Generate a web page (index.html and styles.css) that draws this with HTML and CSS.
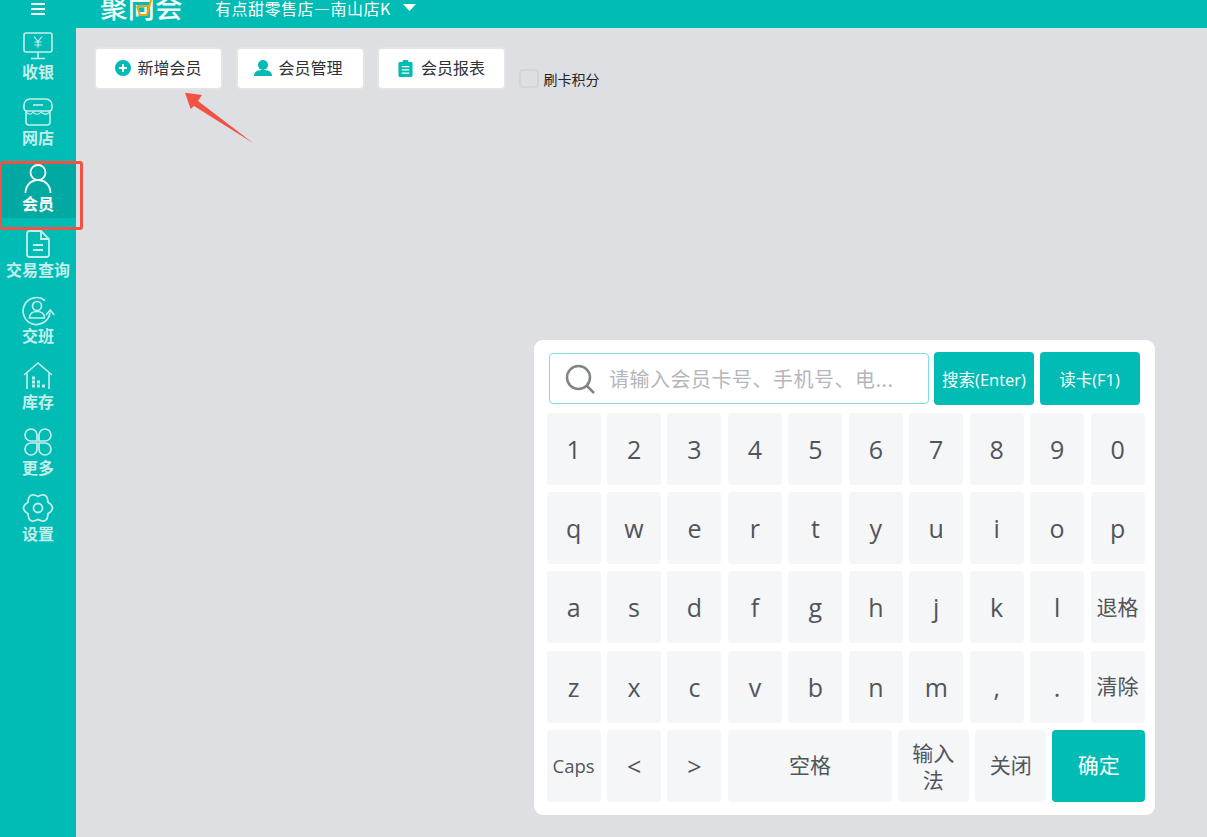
FILE: index.html
```html
<!DOCTYPE html>
<html lang="zh-CN">
<head>
<meta charset="utf-8">
<title>会员</title>
<link rel="stylesheet" href="styles.css">
</head>
<body>
<div class="app">
  <header class="topbar">
    <div class="burger"><span></span><span></span><span></span></div>
    <div class="logo">
      <span>聚</span><span class="logo-mid">向<svg class="cart" viewBox="0 0 16 20"><path d="M1 6h13M1 6l3 9h7L15 0" fill="none" stroke="#eda312" stroke-width="2"/></svg></span><span>会</span>
    </div>
    <div class="store">有点甜零售店—南山店K</div>
    <svg class="caret" viewBox="0 0 13 7"><path d="M0 0h13L6.500 7z" fill="#fff"/></svg>
  </header>
  <div class="body">
    <nav class="side">
      <a class="nav-item">
        <svg class="ico" viewBox="0 0 30 28" fill="none" stroke="#c4eeeb" stroke-width="1.6"><rect x="1" y="1" width="28" height="19" rx="2"/><path d="M15 20v6M8 26.500h14"/><path d="M11 4.500l4 5 4-5M15 9.500v6M11.500 10h7M11.500 13h7" stroke-width="1.200"/></svg>
        <span>收银</span>
      </a>
      <a class="nav-item">
        <svg class="ico" viewBox="0 0 30 28" fill="none" stroke="#c4eeeb" stroke-width="1.600"><path d="M7 1h16a6 6 0 0 1 6 6v3a3 3 0 0 1-3 3H4a3 3 0 0 1-3-3V7a6 6 0 0 1 6-6z"/><path d="M3 13v11a3 3 0 0 0 3 3h18a3 3 0 0 0 3-3V13"/><path d="M10 7h10"/><path d="M3 14c3 3 5 3 7 0 2 3 6 3 8 0 3 3 6 3 9 0" stroke-width="1.200"/></svg>
        <span>网店</span>
      </a>
      <a class="nav-item active">
        <svg class="ico" viewBox="0 0 30 28" fill="none" stroke="#fff" stroke-width="1.800"><circle cx="15" cy="8.500" r="7.500"/><path d="M2.500 29c0-7 5-13 12.500-13s12.500 6 12.500 13"/></svg>
        <span>会员</span>
      </a>
      <a class="nav-item">
        <svg class="ico" viewBox="0 0 30 28" fill="none" stroke="#c4eeeb" stroke-width="1.800"><path d="M18 1H6.500A2.500 2.500 0 0 0 4 3.500v21A2.500 2.500 0 0 0 6.500 27h17a2.500 2.500 0 0 0 2.500-2.500V9z"/><path d="M18 1v8h8M10 15h10M10 20h10"/></svg>
        <span>交易查询</span>
      </a>
      <a class="nav-item">
        <svg class="ico" viewBox="0 0 30 28" fill="none" stroke="#c4eeeb" stroke-width="1.700"><path d="M22 4.500A13.500 13.500 0 1 0 27 16.500"/><path d="M23 19l4.300-5 4 5"/><circle cx="14" cy="10" r="4.500"/><path d="M6.500 22c0-4 3-6.500 7.500-6.500s7.500 2.500 7.500 6.500z" stroke-linejoin="round"/></svg>
        <span>交班</span>
      </a>
      <a class="nav-item">
        <svg class="ico" viewBox="0 0 30 28" fill="none" stroke="#c4eeeb" stroke-width="1.600"><path d="M1 13L15 1l14 12"/><path d="M4 11v16M26 11v16"/><path d="M9 16h3M9 20h3M9 24h3M14 20h3M14 24h3M19 24h3" stroke-width="2.800"/></svg>
        <span>库存</span>
      </a>
      <a class="nav-item">
        <svg class="ico" viewBox="0 0 30 28" fill="none" stroke="#c4eeeb" stroke-width="1.700"><path d="M14 13H8a6 6 0 1 1 6-6z"/><path d="M16 13h6a6 6 0 1 0-6-6z"/><path d="M14 15H8a6 6 0 1 0 6 6z"/><path d="M16 15h6a6 6 0 1 1-6 6z"/></svg>
        <span>更多</span>
      </a>
      <a class="nav-item">
        <svg class="ico" viewBox="0 0 30 28" fill="none" stroke="#c4eeeb" stroke-width="1.800"><path d="M15 2.500Q24.500-2.450 24.960 8.250 34 14 24.960 19.750 24.500 30.450 15 25.500 5.500 30.450 5.040 19.750-4 14 5.040 8.250 5.500-2.450 15 2.500z" stroke-linejoin="round"/><circle cx="15" cy="14" r="4.500"/></svg>
        <span>设置</span>
      </a>
    </nav>
    <main class="main">
      <div class="toolbar">
        <button class="tool"><svg class="tool-ico" viewBox="0 0 16 16"><circle cx="8" cy="8" r="8" fill="#00bcb4"/><path d="M8 4v8M4 8h8" stroke="#fff" stroke-width="2"/></svg>新增会员</button>
        <button class="tool"><svg class="tool-ico wide" viewBox="0 0 18 16"><circle cx="9" cy="5" r="5" fill="#00bcb4"/><path d="M0 16c0-4 3-6 9-6s9 2 9 6z" fill="#00bcb4"/></svg>会员管理</button>
        <button class="tool"><svg class="tool-ico clip" viewBox="0 0 16 18"><path d="M2 2h12a1.500 1.500 0 0 1 1.500 1.500v13A1.500 1.500 0 0 1 14 18H2a1.500 1.500 0 0 1-1.500-1.500v-13A1.500 1.500 0 0 1 2 2z" fill="#00bcb4"/><rect x="5" y="0" width="6" height="4" rx="1" fill="#00bcb4"/><path d="M4 7h8M4 10.500h8M4 14h8" stroke="#fff" stroke-width="1.300"/></svg>会员报表</button>
        <label class="check"><span class="box"></span><span class="check-text">刷卡积分</span></label>
      </div>

      <section class="keypad">
        <div class="search-row">
          <div class="search-input">
            <svg class="search-ico" viewBox="0 0 30 30" fill="none" stroke="#7f8487" stroke-width="2.500"><circle cx="13.500" cy="13.500" r="11.500"/><path d="M22 22l7 7"/></svg>
            <span class="placeholder">请输入会员卡号、手机号、电...</span>
          </div>
          <button class="primary s-btn">搜索(Enter)</button>
          <button class="primary s-btn">读卡(F1)</button>
        </div>
        <div class="keys">
          <div class="key">1</div><div class="key">2</div><div class="key">3</div><div class="key">4</div><div class="key">5</div><div class="key">6</div><div class="key">7</div><div class="key">8</div><div class="key">9</div><div class="key">0</div>
          <div class="key">q</div><div class="key">w</div><div class="key">e</div><div class="key">r</div><div class="key">t</div><div class="key">y</div><div class="key">u</div><div class="key">i</div><div class="key">o</div><div class="key">p</div>
          <div class="key">a</div><div class="key">s</div><div class="key">d</div><div class="key">f</div><div class="key">g</div><div class="key">h</div><div class="key">j</div><div class="key">k</div><div class="key">l</div><div class="key cjk">退格</div>
          <div class="key">z</div><div class="key">x</div><div class="key">c</div><div class="key">v</div><div class="key">b</div><div class="key">n</div><div class="key">m</div><div class="key">,</div><div class="key">.</div><div class="key cjk">清除</div>
        </div>
        <div class="last-row">
          <div class="key caps">Caps</div><div class="key">&lt;</div><div class="key">&gt;</div>
          <div class="key cjk space">空格</div>
          <div class="key cjk ime">输入法</div>
          <div class="key cjk close">关闭</div>
          <div class="key cjk ok">确定</div>
        </div>
      </section>
    </main>
  </div>
  <div class="mark-box"></div>
  <svg class="mark-arrow" viewBox="0 0 80 60"><path d="M4 2.700L21 5l-4 6 55 42-59-37-3.300 3z" fill="#f25244"/></svg>
</div>
</body>
</html>
```
FILE: styles.css
```css
* { box-sizing: border-box; }
html, body { margin: 0; height: 100%; overflow: hidden; }
body { font-family: "Open Sans", "Noto Sans CJK SC", sans-serif; color: #303133; }
.app { position: relative; width: 1207px; height: 837px; display: flex; flex-direction: column; background: #dedfe3; overflow: hidden; }

.topbar { height: 28px; flex: none; background: #00bcb4; display: flex; align-items: center; color: #fff; overflow: hidden; }
.burger { width: 76px; display: flex; flex-direction: column; align-items: center; gap: 3px; margin-top: -11px; }
.burger span { width: 14px; height: 2px; background: #fff; }
.logo { margin-left: 24px; width: 84px; display: flex; font-size: 27.500px; font-weight: 500; line-height: 28px; margin-top: -16px; font-family: "Noto Sans CJK SC", sans-serif; color: #f2fbfa; }
.logo-mid { position: relative; }
.cart { position: absolute; left: 8px; top: 8px; width: 16px; height: 20px; }
.store { margin-left: 31px; font-size: 16px; letter-spacing: 0.500px; line-height: 16px; margin-top: -13px; font-family: "Noto Sans CJK SC", sans-serif; white-space: nowrap; }
.caret { width: 13px; height: 7px; margin-left: 12px; margin-top: -13px; }

.body { flex: 1; display: flex; min-height: 0; }
.side { width: 76px; flex: none; background: #00bcb4; display: flex; flex-direction: column; padding-top: 3px; }
.nav-item { height: 66px; display: flex; flex-direction: column; align-items: center; color: #c4eeeb; font-size: 16px; font-weight: 700; line-height: 20px; font-family: "Noto Sans CJK SC", sans-serif; padding-top: 1px; }
.nav-item .ico { width: 30px; height: 28px; margin-bottom: 1px; overflow: visible; }
.nav-item span { white-space: nowrap; }
.nav-item.active { background: linear-gradient(#00a9a1 0 55px, transparent 55px); color: #fff; height: 66px; }

.main { flex: 1; position: relative; }
.toolbar { display: flex; align-items: flex-start; padding: 19px 0 0 18px; gap: 12.500px; }
.tool { width: 129px; height: 43px; background: #fff; border: 2px solid #e4e4e4; border-radius: 5px; display: flex; align-items: center; justify-content: center; gap: 6px; font-size: 16px; color: #303133; font-family: "Noto Sans CJK SC", sans-serif; padding: 0 0 3px; }
.tool-ico { width: 16px; height: 16px; margin-top: 2px; }
.tool-ico.wide { width: 18px; margin-left: -3px; }
.tool-ico.clip { margin-right: 2px; width: 15px; height: 17px; }
.check { display: flex; align-items: flex-end; margin-top: 22px; gap: 5px; margin-left: 0; }
.box { width: 20px; height: 19px; border: 2px solid #d3d5d8; border-radius: 4px; background: #dedfe3; }
.check-text { font-size: 14px; line-height: 18px; font-family: "Noto Sans CJK SC", sans-serif; color: #222; margin-bottom: 0; }

.keypad { position: absolute; left: 458px; top: 312px; width: 621px; height: 475px; background: #fff; border-radius: 9px; padding: 12px 10px 0 13px; }
.search-row { display: flex; margin-left: 2px; height: 53px; gap: 5.500px; }
.search-input { width: 380px; height: 51px; margin-top: 1px; border: 1px solid #80dfdb; border-radius: 4px; display: flex; align-items: center; padding-left: 15px; margin-right: -0.500px; }
.search-ico { width: 30px; height: 30px; flex: none; }
.placeholder { margin-left: 14px; font-size: 20px; letter-spacing: 0.500px; color: #b4b6ba; font-family: "Noto Sans CJK SC", sans-serif; white-space: nowrap; }
.primary { background: #00bcb4; color: #fff; border: 0; border-radius: 4px; font-family: "Open Sans", "Noto Sans CJK SC", sans-serif; }
.s-btn { width: 100px; height: 53px; font-size: 16.500px; padding: 0; white-space: nowrap; }

.keys { margin: 7.900px 0 0 -0.400px; display: grid; grid-template-columns: repeat(10, 54px); column-gap: 6.440px; row-gap: 7.250px; grid-auto-rows: 72px; }
.key { background: #f5f6f8; border-radius: 4px; display: flex; align-items: center; justify-content: center; font-size: 25px; color: #50555c; text-align: center; }
.key.cjk { font-size: 21px; font-family: "Noto Sans CJK SC", sans-serif; line-height: 27px; padding-bottom: 2px; }
.last-row { margin: 7.250px 0 0 -0.400px; display: flex; height: 72px; gap: 6.440px; }
.last-row .key { flex: none; width: 54px; }
.last-row .key.caps { font-size: 18.500px; }
.last-row .key.space { width: 164px; margin-right: -0.500px; }
.last-row .key.ime { width: 71px; padding: 0 14px 0; }
.last-row .key.close { width: 71px; margin-right: -0.500px; }
.last-row .key.ok { width: 93px; background: #00bcb4; color: #fff; }

.mark-box { position: absolute; left: 0; top: 161px; width: 83px; height: 69px; border: 3px solid #f25244; border-left-width: 2px; border-radius: 3px; }
.mark-arrow { position: absolute; left: 181px; top: 90px; width: 80px; height: 60px; }
```
